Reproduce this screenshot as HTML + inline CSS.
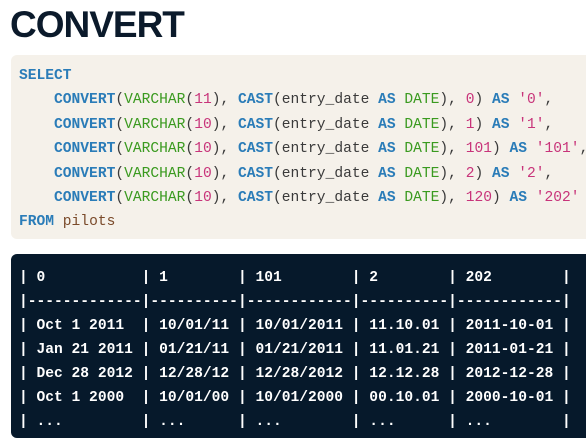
<!DOCTYPE html>
<html><head><meta charset="utf-8"><style>
body{margin:0;background:#fff;width:586px;height:448px;overflow:hidden;position:relative}
h1{position:absolute;left:10px;top:-3px;margin:0;font:bold 37px/56px "Liberation Sans",sans-serif;color:#0b1a2b;letter-spacing:-1px}
.code{position:absolute;left:11px;top:55px;width:600px;height:184px;background:#f5f1ea;border-radius:6px}
pre{margin:0;font:14.6px/24.4px "Liberation Mono",monospace;white-space:pre}
.code pre{position:absolute;left:8px;top:9px;color:#3a3a3a}
.k{color:#2a7cb8;font-weight:bold}.g{color:#3a9a1f}.n{color:#c8347a}.s{color:#c8347a}.i{color:#7a4a2a}
.tbl{position:absolute;left:11px;top:254px;width:600px;height:184px;background:#06192b;border-radius:6px}
.tbl pre{position:absolute;left:8px;top:12px;color:#fff;font-weight:bold;line-height:24px}
</style></head><body>
<h1>CONVERT</h1>
<div class="code"><pre><span class="k">SELECT</span>
    <span class="k">CONVERT</span>(<span class="g">VARCHAR</span>(<span class="n">11</span>), <span class="k">CAST</span>(entry_date <span class="k">AS</span> <span class="g">DATE</span>), <span class="n">0</span>) <span class="k">AS</span> <span class="s">'0'</span>,
    <span class="k">CONVERT</span>(<span class="g">VARCHAR</span>(<span class="n">10</span>), <span class="k">CAST</span>(entry_date <span class="k">AS</span> <span class="g">DATE</span>), <span class="n">1</span>) <span class="k">AS</span> <span class="s">'1'</span>,
    <span class="k">CONVERT</span>(<span class="g">VARCHAR</span>(<span class="n">10</span>), <span class="k">CAST</span>(entry_date <span class="k">AS</span> <span class="g">DATE</span>), <span class="n">101</span>) <span class="k">AS</span> <span class="s">'101'</span>,
    <span class="k">CONVERT</span>(<span class="g">VARCHAR</span>(<span class="n">10</span>), <span class="k">CAST</span>(entry_date <span class="k">AS</span> <span class="g">DATE</span>), <span class="n">2</span>) <span class="k">AS</span> <span class="s">'2'</span>,
    <span class="k">CONVERT</span>(<span class="g">VARCHAR</span>(<span class="n">10</span>), <span class="k">CAST</span>(entry_date <span class="k">AS</span> <span class="g">DATE</span>), <span class="n">120</span>) <span class="k">AS</span> <span class="s">'202'</span>
<span class="k">FROM</span> <span class="i">pilots</span></pre></div>
<div class="tbl"><pre>| 0           | 1        | 101        | 2        | 202        |
|-------------|----------|------------|----------|------------|
| Oct 1 2011  | 10/01/11 | 10/01/2011 | 11.10.01 | 2011-10-01 |
| Jan 21 2011 | 01/21/11 | 01/21/2011 | 11.01.21 | 2011-01-21 |
| Dec 28 2012 | 12/28/12 | 12/28/2012 | 12.12.28 | 2012-12-28 |
| Oct 1 2000  | 10/01/00 | 10/01/2000 | 00.10.01 | 2000-10-01 |
| ...         | ...      | ...        | ...      | ...        |</pre></div>
</body></html>
